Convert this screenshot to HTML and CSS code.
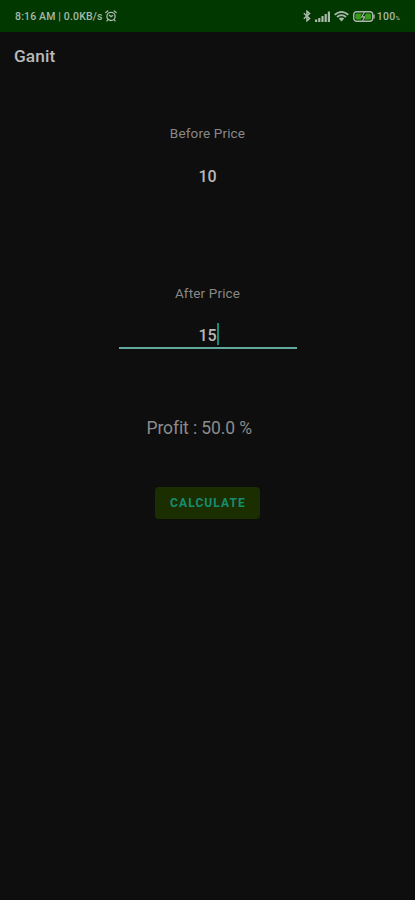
FILE: index.html
```html
<!DOCTYPE html>
<html lang="en">
<head>
<meta charset="utf-8">
<title>Ganit</title>
<link rel="stylesheet" href="styles.css">
</head>
<body>
<div class="status">
  <span class="clock">8:16 AM | 0.0KB/s</span>
  <svg class="alarm" width="12" height="12" viewBox="0 0 12 12" fill="none" stroke="currentColor" stroke-width="1.3" stroke-linecap="round"><circle cx="6" cy="6.4" r="4.1"/><path d="M.8 2.6 2.8 1M11.2 2.6 9.2 1M2.9 9.7 2 10.9M9.1 9.7l.9 1.2M4.4 5.2 6 6.6l1.5-1"/></svg>
  <div class="icons">
    <svg width="8" height="12" viewBox="0 0 8 12" fill="none" stroke="currentColor" stroke-width="1.5"><path d="M.8 3.2 6.6 8.4 4 10.8V1.2l2.6 2.4L.8 8.8"/></svg>
    <svg class="signal" width="15" height="11" viewBox="0 0 15 11" fill="currentColor"><path d="M0 8.5h2.2V11H0zM3.2 7h2.2v4H3.2zM6.4 5h2.2v6H6.4zM9.6 3h2.2v8H9.6zM12.8.5H15V11h-2.2z"/></svg>
    <svg class="wifi" width="15" height="11" viewBox="0 0 15 11" fill="none" stroke="currentColor" stroke-width="1.8"><path d="M.7 3.8Q7.5-2 14.3 3.8M3 6q4.5-3.8 9 0"/><path d="M4.8 7.5q2.7-2 5.4 0L7.5 10.5z" fill="currentColor" stroke="none"/></svg>
    <svg class="battery" width="22" height="11" viewBox="0 0 22 11"><rect x=".7" y=".7" width="19" height="9.6" rx="3" fill="none" stroke="currentColor" stroke-width="1.4"/><path d="M4 2.4h5L7.4 5.8h1.4L7.9 8.6H4q-1.7 0-1.7-1.7V4.1Q2.3 2.4 4 2.4zM12.8 2.4h3.6q1.7 0 1.7 1.7v2.8q0 1.7-1.7 1.7h-5L13 5.3h-1.5z" fill="#3c9a1c"/><path d="m11.4 1.2-2.7 4.6h3L9.6 9.8" fill="none" stroke="currentColor" stroke-width="1.2"/><path d="M20.3 3.5h1.4v4h-1.4z" fill="currentColor"/></svg>
    <span class="level">100<small>%</small></span>
  </div>
</div>
<header class="title">Ganit</header>
<main>
  <label class="label">Before Price</label>
  <div class="field">10</div>
  <label class="label second">After Price</label>
  <div class="field active">15<i class="caret"></i></div>
  <p class="result">Profit : 50.0 %</p>
  <button class="calc">CALCULATE</button>
</main>
</body>
</html>
```
FILE: styles.css
```css
* { box-sizing: border-box; }
body {
  margin: 0;
  height: 900px;
  overflow: hidden;
  background: #0e0e0e;
  color: #b9b9b9;
  font-family: Roboto, sans-serif;
}
.status {
  display: flex;
  align-items: center;
  height: 32px;
  padding: 0 15px;
  background: #003800;
  color: #a9b8a9;
  font-size: 10.5px;
  font-weight: 500;
}
svg { display: block; flex: none; }
.clock { width: 88px; white-space: nowrap; letter-spacing: 0.16px; }
.alarm { margin-left: 2px; }
.icons { display: flex; align-items: center; margin-left: auto; }
.signal { margin-left: 4px; }
.wifi { margin-left: 4px; }
.battery { margin-left: 4px; }
.level { margin-left: 2px; letter-spacing: 0.2px; }
.level small { font-size: 6px; }
.title {
  height: 49px;
  padding-left: 14px;
  font-size: 17.3px;
  font-weight: 500;
  line-height: 49px;
  letter-spacing: 0.1px;
}
main {
  display: flex;
  flex-direction: column;
  align-items: center;
  padding-top: 43px;
}
.label {
  height: 20px;
  font-size: 13.5px;
  line-height: 18px;
  letter-spacing: 0.15px;
  color: #888;
}
.second { margin-top: 90px; }
.field {
  width: 178px;
  height: 34px;
  margin-top: 16px;
  font-size: 16px;
  font-weight: 500;
  line-height: 34px;
  text-align: center;
}
.active {
  display: flex;
  justify-content: center;
  height: 29px;
  line-height: 32px;
  border-bottom: 2px solid #62a99b;
}
.caret {
  width: 2px;
  height: 22px;
  margin: 3px -2px 0 0;
  background: #168c77;
}
.result {
  width: 122px;
  margin: 67px 0 0;
  font-size: 17.5px;
  line-height: 24px;
  letter-spacing: -0.1px;
  white-space: nowrap;
  color: #8b8b8b;
}
.calc {
  width: 105px;
  height: 32px;
  margin-top: 47px;
  padding: 0 0 0 1px;
  border: 0;
  border-radius: 4px;
  background: #1b2e00;
  color: #168d72;
  font: 700 12px/32px Roboto, sans-serif;
  letter-spacing: 1.1px;
}
```
